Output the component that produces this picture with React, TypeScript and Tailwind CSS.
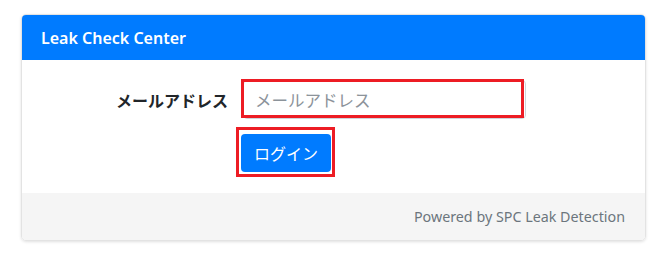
import React from "react";

export default function App() {
  return (
    <div className="w-[666px] h-[261px] bg-white pt-[14px] pl-[21px]" style={{ fontFamily: '"Noto Sans", "Noto Sans CJK JP", sans-serif' }}>
      <div className="w-[625px] rounded-[5px] border border-[#e3e3e3] shadow-[0_1px_3px_rgba(0,0,0,0.12)] overflow-hidden">
        <div className="h-[45px] bg-[#007bff] flex items-center px-[19px] text-white text-[16px] font-semibold">
          Leak Check Center
        </div>
        <div className="bg-white h-[133px] pt-[20px]">
          <div className="flex items-center">
            <label className="w-[206px] text-right font-bold text-[16px] text-[#212529]" style={{ fontFamily: '"Noto Sans CJK JP", sans-serif' }}>
              メールアドレス
            </label>
            <div className="relative ml-[15px]">
              <input
                placeholder="メールアドレス"
                className="w-[283px] h-[39px] border border-[#ced4da] rounded-[4px] pl-[11px] pr-[12px] text-[16.5px] placeholder:text-[#8c939a] outline-none"
                style={{ fontFamily: '"Noto Sans CJK JP", sans-serif' }}
              />
              <div className="absolute left-[-2px] top-[-1px] w-[283px] h-[39px] border-[3px] border-[#ed1c24] pointer-events-none" />
            </div>
          </div>
          <div className="pl-[219px] mt-[15px]">
            <div className="relative inline-block">
              <button
                className="w-[90px] h-[38px] rounded-[4px] bg-[#007bff] text-white text-[16px] flex items-center justify-center"
                style={{ fontFamily: '"Noto Sans CJK JP", sans-serif' }}
              >
                ログイン
              </button>
              <div className="absolute left-[-5px] top-[-7px] w-[99px] h-[50px] border-[3px] border-[#ed1c24] pointer-events-none" />
            </div>
          </div>
        </div>
        <div className="h-[47px] bg-[#f5f5f5] flex items-center justify-end pr-[20px] text-[14.3px] text-[#6c757d]">
          Powered by SPC Leak Detection
        </div>
      </div>
    </div>
  );
}
